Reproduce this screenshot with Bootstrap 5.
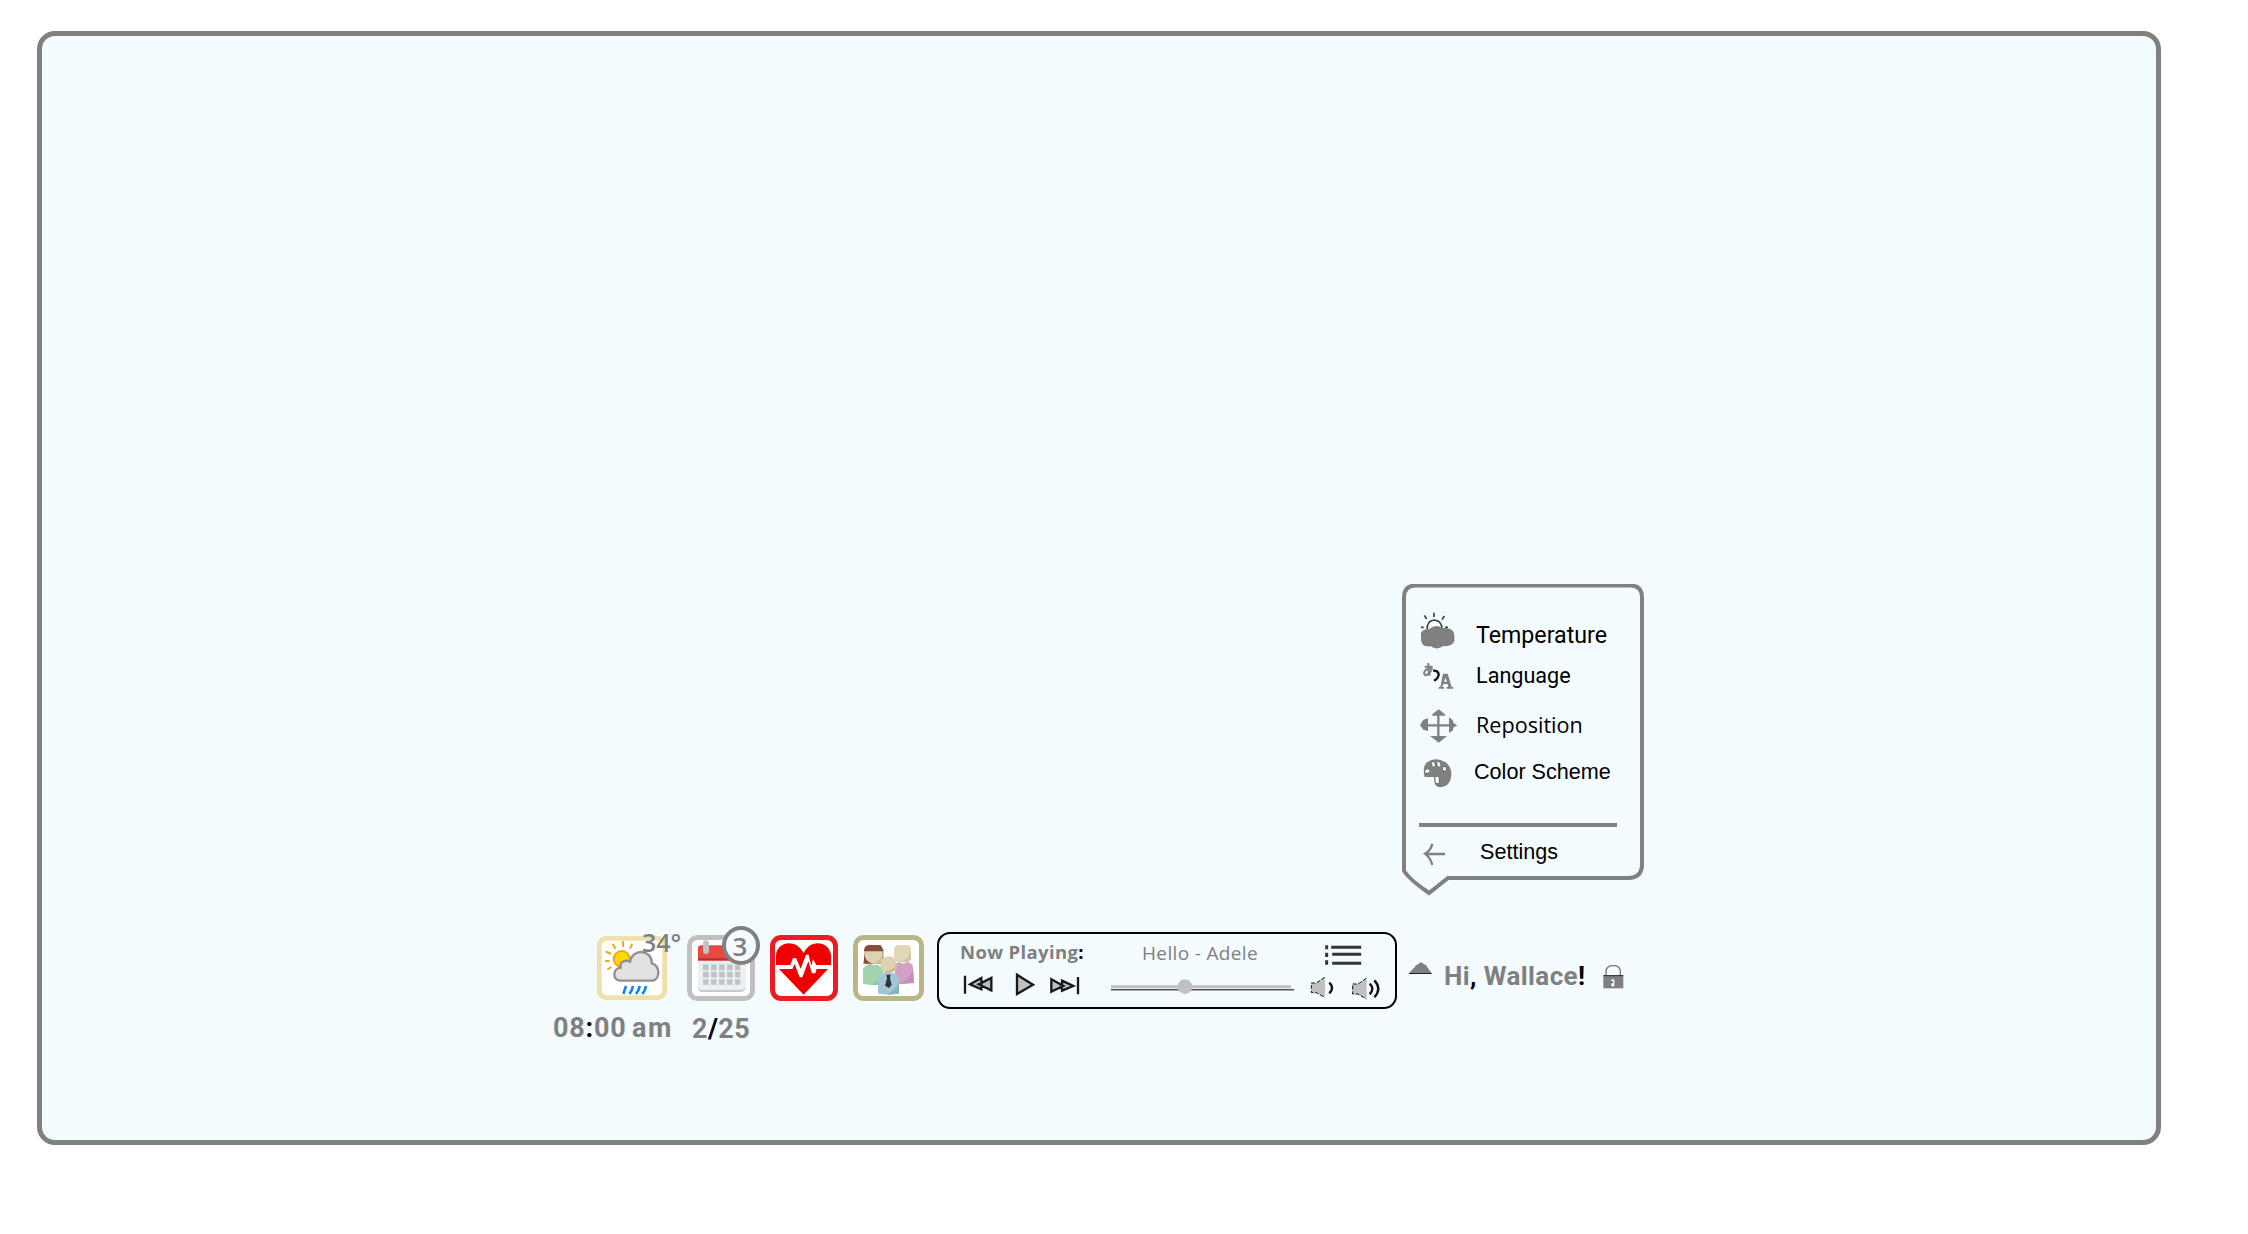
<!DOCTYPE html>
<html lang="en">
<head>
<meta charset="utf-8">
<title>Home dashboard</title>
<link href="https://cdn.jsdelivr.net/npm/bootstrap@5.3.0/dist/css/bootstrap.min.css" rel="stylesheet">
<style>
body{background:#fff;overflow:hidden;color:#808080;font-family:"Open Sans",sans-serif}
.screen{width:2124px;height:1114px;margin:31px 0 0 37px;border:5px solid #808080;border-radius:18px;background:#f3fbfe}
.dock{padding:895px 0 0 512px}
svg{display:block;flex:none}
.rb{font-family:Roboto,sans-serif}
.ls{font-family:"Liberation Sans",sans-serif}
.caption-line{font-size:27px;line-height:30px;font-weight:700;letter-spacing:.4px}
.slot-weather{width:133px}
.slot-weather svg{margin:5px 0 0 43px}
.slot-weather .caption-line{margin:13px 0 0 -1px;display:flex}
.clock-time{letter-spacing:.8px;width:79px}
.clock-half{letter-spacing:1.5px}
.degree{left:88px;top:-6px;font-size:25px;line-height:34px;font-weight:600}
.slot-cal{width:83px}
.slot-cal svg.tile{margin-top:4px}
.slot-cal .caption-line{margin:13px 0 0 5px}
.count-badge{left:35px;top:-5px;width:38px;height:39px;border:4px solid #808080;border-radius:50%;background:#f3fbfe;font-size:26px;line-height:32px;font-weight:600;padding-right:2px}
.slot-heart{width:83px;padding-top:4px}
.slot-people{width:84px;padding-top:4px}
.player{width:460px;height:77px;margin-top:1px;border:2px solid #000;border-radius:13px;padding:0 16px 0 22px}
.player-head{height:38px}
.player-head svg{margin-top:11px}
.now{font-size:18.5px;font-weight:700;line-height:24px;width:182px;padding-top:6px;letter-spacing:.35px;margin-left:-1px}
.song{font-size:19px;line-height:24px;padding-top:7px;width:183px;letter-spacing:.35px}
.user{padding:28px 0 0 12px}
.user .arrow{margin-top:3px}
.user .lock{margin:6px 0 0 15px}
.hello{font-size:26px;line-height:30px;font-weight:700;margin:2px 0 0 12px;width:144px;letter-spacing:.4px}
.settings-menu{left:1360px;top:548px;width:244px;height:312px}
.settings-menu .outline{left:0;top:0}
.menu-list{padding:28px 0 0 18px;color:#000;line-height:28px}
.menu-item{display:flex;align-items:flex-start;font-size:21.6px}
.menu-item svg{width:38px;margin-right:18px}
.item-temp{font-size:23.2px;margin-bottom:12px}
.item-temp span{margin-top:9px}
.item-lang{margin-bottom:17px}
.item-move{margin-bottom:15px}
.item-move span{margin-top:2px}
.item-color svg{margin-right:16px}
.divider{width:198px;height:4px;background:#808080;margin:35px 0 16px -1px}
.item-back svg{margin-right:22px}
.item-back span{margin-top:-5px}
</style>
<script src="https://cdn.jsdelivr.net/npm/bootstrap@5.3.0/dist/js/bootstrap.bundle.min.js"></script>
</head>
<body>
<main class="screen position-relative">
<div class="dock d-flex align-items-start text-nowrap">
  <section class="slot-weather position-relative">
    <svg width="70" height="64" viewBox="171 48 210 192">
      <rect x="178" y="55" width="196" height="178" rx="22" fill="#fff" stroke="#efe1ab" stroke-width="15"/>
      <g stroke="#f0a818" stroke-width="6"><path d="M249 64v16M218 71l8 15M277 71l-7 15M197 94l16 8M195 123h14M202 148l12-7"/></g>
      <circle cx="245" cy="117" r="24" fill="#ffdc00" stroke="#f8a020" stroke-width="6"/>
      <path d="M240 182C216 181 218 144 242 143 237 126 256 118 270 125 276 86 334 85 336 130 360 137 362 178 338 182Z" fill="#e2e2e4" stroke="#8f8f94" stroke-width="7"/>
      <path d="M258 198l-8 24M279 198q-2 13-11 24M299 198q-2 13-11 24M318 198q-2 13-11 24" fill="none" stroke="#1686e8" stroke-width="8"/>
    </svg>
    <span class="degree position-absolute">34°</span>
    <div class="caption-line rb"><span class="clock-time">08<span class="text-black">:</span>00</span><span class="clock-half">am</span></div>
  </section>
  <section class="slot-cal position-relative">
    <svg class="tile" width="68" height="66" viewBox="441 45 204 198">
      <rect x="448.500" y="52.500" width="189" height="183" rx="24" fill="#fff" stroke="#c0c0c0" stroke-width="15"/>
      <path d="M474 118h142v84q0 14-14 14H488q-14 0-14-14Z" fill="#c3cad0"/>
      <path d="M474 118h142v78q0 14-14 14H488q-14 0-14-14Z" fill="#eceff1"/>
      <path d="M474 122V86q0-10 10-10h132v46Z" fill="#e84a3f"/><path d="M474 115h142v6H474Z" fill="#b8322c"/>
      <rect x="489" y="61" width="18" height="41" rx="9" fill="#bdc3c7"/>
      <path d="M489 142h112M489 164h112M489 186h112" stroke="#bdc3c7" stroke-width="17" stroke-dasharray="17 7"/>
    </svg>
    <span class="count-badge position-absolute text-center">3</span>
    <div class="caption-line rb">2<span class="text-black">/</span>25</div>
  </section>
  <section class="slot-heart">
    <svg width="68" height="66" viewBox="30 45 204 198">
      <rect x="37.500" y="52.500" width="189" height="183" rx="26" fill="#fff" stroke="#ed1c24" stroke-width="15"/>
      <path d="M48 135V104C52 64 108 54 131 99 152 54 208 64 213 104V135H169L159 117 154 138 146 104 138 104 122 146 108 114 99 114 91 135ZM57 147H97L104 132 119 172 127 172 145 124 156 160 166 160 170 147H204L131 224Z" fill="#f00000"/>
    </svg>
  </section>
  <section class="slot-people">
    <svg width="71" height="66" viewBox="279 45 213 198">
      <rect x="286.500" y="52.500" width="198" height="183" rx="24" fill="#fff" stroke="#b8b785" stroke-width="15"/>
      <path d="M312 91q2-15 14-16h36l8 14v34l-8 8h-52l2-12Z" fill="#854c3b"/>
      <path d="M312 94h56v25q-4 13-20 13-36-2-36-38Z" fill="#dcd3b2"/><path d="M368 94v25q-6 13-30 12 28-7 30-37Z" fill="#c9be98"/>
      <path d="M309 191V148q6-14 22-17l10 5 10-3 20 14-6 48h-36Z" fill="#a1d3ae"/><path d="M371 150l-9 44h-30q30-8 39-44Z" fill="#8dc3a1"/>
      <rect x="402" y="75" width="51" height="51" rx="13" fill="#e0d8b8"/><path d="M453 92v25q-5 9-20 9h-16q30-5 36-34Z" fill="#d0c6a2"/>
      <path d="M405 133l12-7 13 5 14-6 14 9 4 55-48 3-10-35Z" fill="#d5a0c7"/><path d="M459 145l3 44-46 3q34-12 43-47Z" fill="#c391b8"/>
      <path d="M354 221V178q2-16 20-20h25q16 4 18 20v43l-30 3Z" fill="#a1c6d4"/><path d="M417 184v37l-38 3q30-13 38-40Z" fill="#88b2c3"/>
      <circle cx="386" cy="134" r="25" fill="#dcd2af"/><path d="M411 130c1 25-25 37-41 25q30-3 41-25Z" fill="#c8bd96"/>
      <path d="M379 164h13l-2 10 5 20-8 10-12-7 6-22Z" fill="#303338"/>
    </svg>
  </section>
  <section class="player">
    <div class="player-head d-flex">
      <div class="now">Now Playing<span class="text-black">:</span></div>
      <div class="song">Hello - Adele</div>
      <svg width="37" height="20" viewBox="495 75 110 60"><path d="M513 82h90M516 103h87M516 130h87" stroke="#333" stroke-width="9"/><path d="M495 76h9v12h-9ZM495 98h9v13h-9ZM495 121h9v13h-9Z" fill="#333"/></svg>
    </div>
    <svg width="420" height="34" viewBox="93 152 1260 102">
      <g fill="#c0c0c0" stroke="#161a20" stroke-width="7">
        <path d="M105 163v54M444 167v52"/>
        <path d="M154 170v34l-34-15ZM184 170v37l-38-18ZM364 174v37l36-17ZM396 178v30l34-14ZM261 160v58l48-28Z"/>
      </g>
      <path d="M543 196.500h540" stroke="#c0c0c0" stroke-width="9"/><path d="M543 205.500h549" stroke="#000" stroke-width="3"/>
      <circle cx="765" cy="196" r="22" fill="#c0c0c0"/>
      <g fill="#c0c0c0"><path d="M1145 185h14l26-17v60l-26-14h-14ZM1268 188h16l26-17v62l-26-15h-16Z"/></g>
      <g fill="none" stroke="#111" stroke-width="5"><path d="M1184 168l-25 17h-15v29h15l25 14M1309 171l-25 17h-16v30h16l25 15" stroke-width="3" stroke-dasharray="12 5"/><path d="M1198 184q16 16 0 32M1319 187q16 15 0 32M1333 177q24 25 0 51" stroke-width="7"/></g>
    </svg>
  </section>
  <section class="user d-flex align-items-start">
    <svg class="arrow" width="23" height="12" viewBox="43 96 69 36"><path d="M43 130L65 106 79 97 94 106 111 130Z" fill="#808080"/><path d="M43 130.500h68" stroke="#222" stroke-width="3"/></svg>
    <div class="hello rb">Hi<span class="text-black">,</span> Wallace<span class="text-black">!</span></div>
    <svg class="lock" width="21" height="24" viewBox="623 104 63 72"><path d="M632 136V122q2-16 22-16t21 16v14" fill="none" stroke="#777" stroke-width="4"/><path d="M624 136h60v38h-60Z" fill="#808080"/><path d="M624 136h60" stroke="#222" stroke-width="3"/><path d="M648 147h9v21h-9Z" fill="#fff"/><path d="M648 153h4v6h-4Z" fill="#222"/></svg>
  </section>
</div>
<nav class="settings-menu position-absolute text-nowrap">
  <svg class="outline position-absolute" width="244" height="312" viewBox="0 0 244 312"><path d="M2 287V13Q2 1.500 14 1.500H228Q240 1.500 240 13V280Q240 294 226 294H46L27 309Q8 296 2 287Z" fill="none" stroke="#808080" stroke-width="4"/></svg>
  <div class="menu-list position-relative">
    <div class="menu-item item-temp rb"><svg height="38" viewBox="75 112 114 114"><g stroke="#3a4044" stroke-width="5"><path d="M117 114v13M88 122l7 11M148 124l-7 11M78 158h8M150 158h9"/><path d="M97 165q-3-26 21-29 25 3 22 29" fill="#fff"/></g><path d="M78 176q5-14 24-12 20-18 40-4 36-2 36 22v18q-7 17-33 14-20 14-38 1-29 3-29-21Z" fill="#808080"/></svg><span>Temperature</span></div>
    <div class="menu-item item-lang rb"><svg height="30" viewBox="75 262 114 90"><g fill="none" stroke="#808080" stroke-width="6"><path d="M89 276h24M100 265q-1 20 4 38M113 283q-22-4-26 12 4 16 22-8"/><path d="M114 288q16-1 17 12-2 13-14 18" stroke="#111" stroke-width="7"/></g><path d="M144 297h14l12 40h5v5h-20v-5h5l-2-9h-13l-3 9h5v5h-16v-5h5Zm7 12-4 12h9Z" fill="#808080" fill-rule="evenodd"/></svg><span>Language</span></div>
    <div class="menu-item item-move"><svg height="34" viewBox="75 28 114 102"><path d="M130 36v87M80 77h100" stroke="#808080" stroke-width="7"/><path d="M110 48l4-6 17-13 17 13 4 6ZM105 109h51l-8 7-17 13-17-13ZM75 77l10-17 14-4v38l-14-4ZM162 53l11 8 3 10 11 6-11 6-3 10-11 6Z" fill="#808080"/></svg><span>Reposition</span></div>
    <div class="menu-item item-color ls"><svg height="30" viewBox="75 174 114 90"><path d="M96 187q25-18 56 0 18 15 17 38-2 34-32 37-15 0-18-12l-2-19H89q-8-30 7-44Z" fill="#808080"/><path d="M109 186h9l3 13-8 2ZM125 186h9l4 13-9 2ZM143 201h10v13l-9-3ZM90 211l9-5 6 7-6 6h-9ZM120 230h12v20h-10Z" fill="#fff" stroke="#333" stroke-width="1"/></svg><span>Color Scheme</span></div>
    <div class="divider"></div>
    <div class="menu-item item-back ls"><svg height="24" viewBox="75 130 114 72"><path d="M150 163H90M112 132Q108 152 90 162 106 174 112 196" fill="none" stroke="#808080" stroke-width="7"/></svg><span>Settings</span></div>
  </div>
</nav>
</main>
</body>
</html>
